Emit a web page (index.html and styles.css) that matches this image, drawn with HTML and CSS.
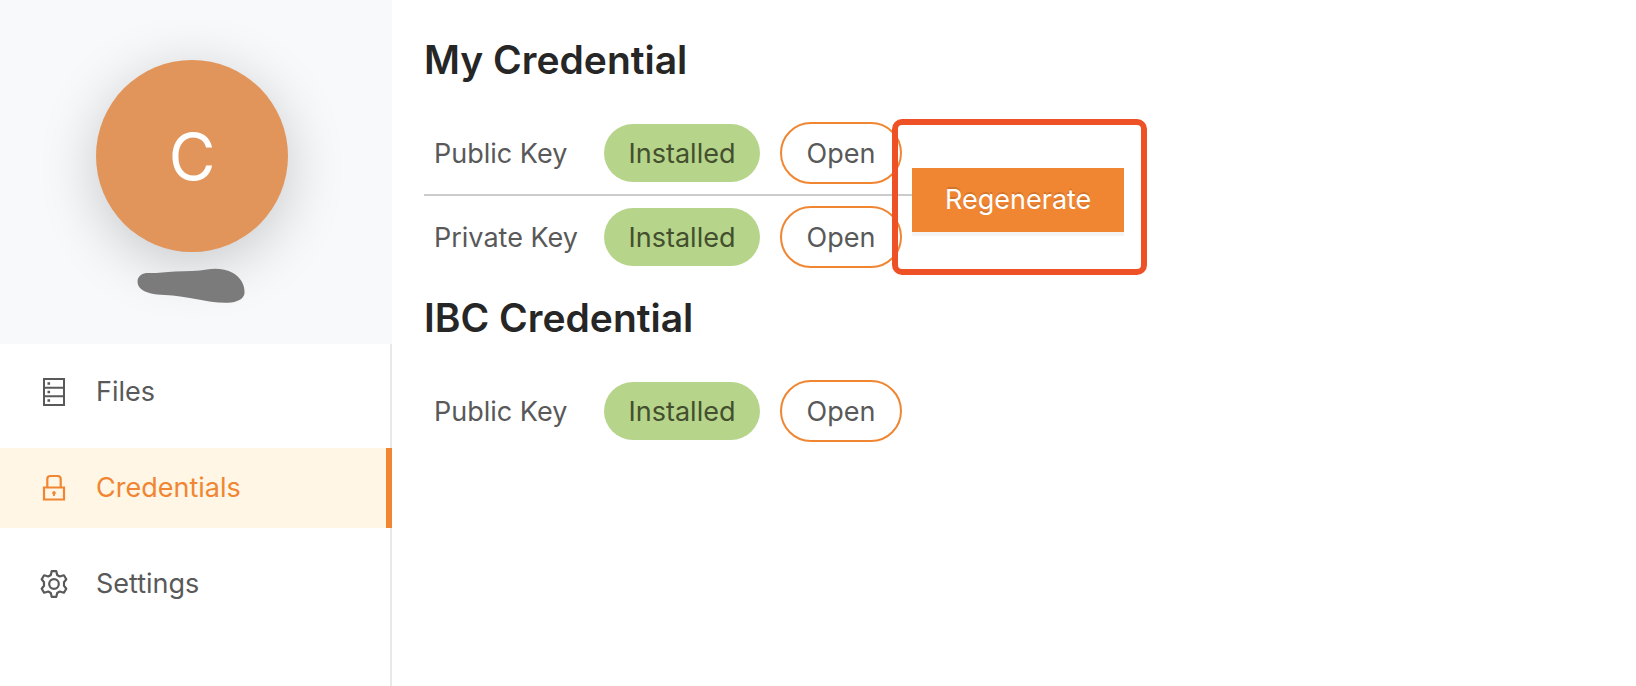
FILE: index.html
```html
<!DOCTYPE html>
<html lang="en">
<head>
<meta charset="utf-8">
<title>Credentials</title>
<link rel="stylesheet" href="styles.css">
</head>
<body>
<div class="layout">
  <aside class="sidebar">
    <div class="profile">
      <div class="avatar">C</div>
      <svg class="redacted" width="110" height="36" viewBox="0 0 110 36" aria-hidden="true">
        <path fill="#7b7b7b" d="M9 5C19 5.500 27 4 38 3.500C50 3 61 3 70 1.500C78 .300 88 .500 96 5C104 10 108 17 107.500 25C107 31 100 34.500 91 34.700C80 35 70 33 60 31.200C48 29 38 27.500 28 27C17 26.500 8 25 3 20C-2 14 1 6 9 5Z"/>
      </svg>
    </div>
    <nav class="menu">
      <a class="item" href="#files">
        <svg class="icon" viewBox="0 0 28 28" fill="none" stroke="currentColor" aria-hidden="true">
          <path stroke-width="2" d="M4 1H24V27H4Z"/>
          <path stroke-width="2" d="M4 9.700H24M4 18.300H24"/>
          <path fill="currentColor" stroke="none" d="M7.500 4.200h2.600v2.600H7.500zM7.500 12.700h2.600v2.600H7.500zM7.500 21.200h2.600v2.600H7.500z"/>
        </svg>
        <span>Files</span>
      </a>
      <a class="item active" href="#credentials" aria-current="page">
        <svg class="icon" viewBox="0 0 28 28" fill="none" stroke="currentColor" aria-hidden="true">
          <path stroke-width="2.200" d="M4 13.500H24V25.500H4ZM7.300 13.500V5A3 3 0 0 1 10.300 2H17.700A3 3 0 0 1 20.700 5V13.500"/>
          <path fill="currentColor" stroke="none" d="M14 17a1.900 1.900 0 0 1 .9 3.500V22h-1.800V20.500A1.900 1.900 0 0 1 14 17Z"/>
        </svg>
        <span>Credentials</span>
      </a>
      <a class="item" href="#settings">
        <svg class="icon" viewBox="0 0 28 28" fill="none" stroke="currentColor" stroke-width="2.200" stroke-linejoin="round" aria-hidden="true">
          <path d="M11.700 1.200H16.300L17.200 5L19.700 6.500L23.900 5.300L26.300 9.300L24 12.200V15.800L26.300 18.700L23.900 22.700L19.700 21.500L17.200 23L16.300 26.800H11.700L10.800 23L8.300 21.500L4.100 22.700L1.700 18.700L4 15.800V12.200L1.700 9.300L4.100 5.300L8.300 6.500L10.800 5Z"/>
          <circle cx="14" cy="14" r="4.800"/>
        </svg>
        <span>Settings</span>
      </a>
    </nav>
  </aside>
  <main class="content">
    <h1 class="title">My Credential</h1>
    <div class="group">
      <table class="keys">
        <tr>
          <th scope="row">Public Key</th>
          <td class="state"><span class="tag">Installed</span></td>
          <td class="action"><button class="open" type="button">Open</button></td>
        </tr>
        <tr>
          <th scope="row">Private Key</th>
          <td class="state"><span class="tag">Installed</span></td>
          <td class="action"><button class="open" type="button">Open</button></td>
        </tr>
      </table>
      <div class="highlight">
        <button class="primary" type="button">Regenerate</button>
      </div>
    </div>
    <h1 class="title">IBC Credential</h1>
    <div class="group">
      <table class="keys">
        <tr>
          <th scope="row">Public Key</th>
          <td class="state"><span class="tag">Installed</span></td>
          <td class="action"><button class="open" type="button">Open</button></td>
        </tr>
      </table>
    </div>
  </main>
</div>
</body>
</html>
```
FILE: styles.css
```css
* {
  box-sizing: border-box;
}

body {
  margin: 0;
  background: #fff;
  color: #595959;
  font: 27px/40px Inter, "Liberation Sans", sans-serif;
}

.layout {
  display: flex;
  min-height: 100vh;
}

.sidebar {
  display: flex;
  flex: none;
  flex-direction: column;
  width: 392px;
}

.profile {
  display: flex;
  flex-direction: column;
  align-items: center;
  gap: 16px;
  padding: 60px 8px 40px 0;
  background: #f8f9fb;
}

.avatar {
  width: 192px;
  height: 192px;
  border-radius: 50%;
  background: #e2955a;
  box-shadow: 0 12px 60px rgba(0, 0, 0, 0.2);
  color: #fff;
  font-size: 64px;
  line-height: 194px;
  text-align: center;
}

.redacted {
  position: relative;
}

.menu {
  display: flex;
  flex: 1;
  flex-direction: column;
  gap: 16px;
  padding-top: 8px;
  border-right: 2px solid #e8e8e8;
}

.item {
  display: flex;
  align-items: center;
  gap: 28px;
  height: 80px;
  padding-left: 40px;
  color: #595959;
  text-decoration: none;
}

.active {
  margin-right: -2px;
  border-right: 6px solid #f08632;
  background: #fff6e6;
  color: #f08632;
}

.icon {
  width: 28px;
  height: 28px;
}

.content {
  flex: 1;
  padding: 32px;
}

.title {
  margin: 0 0 24px;
  color: #262626;
  font-size: 39px;
  font-weight: 600;
  line-height: 56px;
}

.group {
  display: flex;
  align-items: center;
  margin-bottom: 12px;
}

.keys {
  border-collapse: separate;
  border-spacing: 0;
}

.keys th,
.keys td {
  padding: 10px;
}

.keys tr:not(:last-child) > * {
  border-bottom: 2px solid #ccc;
}

.keys th {
  width: 170px;
  padding: 12px 0 10px 10px;
  font-weight: 400;
  text-align: left;
  white-space: nowrap;
}

.state {
  width: 176px;
}

.action {
  width: 142px;
}

.tag {
  display: block;
  padding-top: 2px;
  border-radius: 29px;
  background: #b6d48a;
  color: #434f2e;
  line-height: 56px;
  text-align: center;
}

.open {
  display: block;
  width: 100%;
  height: 62px;
  padding: 2px 0 0;
  border: 2px solid #f08632;
  border-radius: 31px;
  background: #fff;
  color: #595959;
  font: inherit;
}

.highlight {
  position: relative;
  padding-top: 10px;
}

.highlight::after {
  position: absolute;
  inset: -39px -23px -43px -20px;
  border: 6px solid #ef5126;
  border-radius: 10px;
  content: "";
  pointer-events: none;
}

.primary {
  display: block;
  height: 64px;
  padding: 0 33px;
  border: 0;
  background: #f08632;
  box-shadow: 0 4px 0 rgba(0, 0, 0, 0.045);
  color: #fff;
  font: inherit;
  text-shadow: 0 -2px 0 rgba(0, 0, 0, 0.12);
}
```
